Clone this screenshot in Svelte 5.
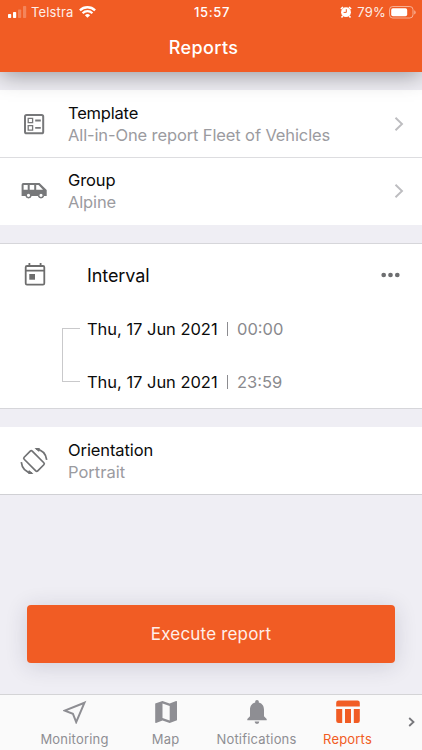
<script>
  const dates = [
    { day: 'Thu, 17 Jun 2021', time: '00:00' },
    { day: 'Thu, 17 Jun 2021', time: '23:59' }
  ];
</script>

{#snippet chevron()}
  <svg class="chevron" width="10" height="16" viewBox="0 0 10 16"><path d="M1.500 1.700 8 8l-6.500 6.300" fill="none" stroke="#bdbdc0" stroke-width="1.9" /></svg>
{/snippet}

<div class="screen">
  <header>
    <div class="status">
      <div class="left">
        <svg width="19" height="12" viewBox="0 0 19 12" fill="#fff">
          <rect x="0" y="8" width="3.200" height="4" rx=".7" />
          <rect x="5" y="6" width="3.200" height="6" rx=".7" />
          <rect x="10" y="3.500" width="3.200" height="8.500" rx=".7" opacity=".25" />
          <rect x="15" y="0" width="3.200" height="12" rx=".7" opacity=".25" />
        </svg>
        <span class="carrier">Telstra</span>
        <svg class="wifi" width="17" height="12" viewBox="0 0 17 12" fill="none" stroke="#fff" stroke-width="2.300">
          <path d="M.9 4.400a10.800 10.800 0 0 1 15.200 0M3.600 7.200a7 7 0 0 1 9.800 0" />
          <path d="M8.500 11.800 5.900 9.300a3.700 3.700 0 0 1 5.200 0z" fill="#fff" stroke="none" />
        </svg>
      </div>
      <span class="clock">15:57</span>
      <div class="right">
        <svg width="12" height="12" viewBox="0 0 12 12">
          <circle cx="6" cy="6.200" r="4.900" fill="#fff" />
          <path d="M.9 3 3 1M11.100 3 9 1M2.700 10 1.500 11.400M9.300 10l1.200 1.400" stroke="#fff" stroke-width="1.600" />
          <path d="M6.300 3.200v3.200H3.600" fill="none" stroke="#f15c24" stroke-width="1" />
        </svg>
        <span class="percent">79%</span>
        <svg class="battery" width="27" height="13" viewBox="0 0 27 13">
          <rect x=".5" y=".5" width="23.500" height="11.500" rx="3.200" fill="none" stroke="#fff" stroke-opacity=".5" />
          <rect x="2.200" y="2.200" width="16" height="8.100" rx="1.700" fill="#fff" />
          <path d="M25.200 4.300v4.200q1.500-.6 1.500-2.100t-1.500-2.100" fill="#fff" opacity=".5" />
        </svg>
      </div>
    </div>
    <h1><span>Reports</span></h1>
  </header>

  <main>
    <section class="first">
      <div class="row divided">
        <svg class="icon" width="28" height="28" viewBox="0 0 28 28" fill="none" stroke="#77787a">
          <rect x="5" y="4.900" width="18.200" height="18.400" rx="1.600" stroke-width="2" />
          <path d="M8.200 8.300h4.400v4.400H8.200zM8.200 15.700h4.400v4.400H8.200z" stroke-width="1.300" />
          <path d="M15.200 10.500h5.600M15.200 17.900h5.600" stroke-width="1.900" />
        </svg>
        <div class="copy"><b class="template">Template</b><span class="allin">All-in-One report Fleet of Vehicles</span></div>
        {@render chevron()}
      </div>
      <div class="row vehicle">
        <svg class="icon" width="28" height="28" viewBox="0 0 28 28">
          <path fill="#77787a" fill-rule="evenodd" d="M3.300 6h16.200l7.200 7v6h-2.600a3.200 3.200 0 0 1-6.200 0h-6.300a3.200 3.200 0 0 1-6.200 0H1.600V7.700Q1.600 6 3.300 6zM3.600 8v4.700h4.100V8zM9.700 8v4.700h4.500V8zM16.200 8v4.700h6.800L18.500 8z" />
          <circle cx="8.500" cy="18.300" r="2.200" fill="#fff" stroke="#77787a" stroke-width="1.200" />
          <circle cx="21" cy="18.300" r="2.200" fill="#fff" stroke="#77787a" stroke-width="1.200" />
        </svg>
        <div class="copy"><b class="group">Group</b><span class="alpine">Alpine</span></div>
        {@render chevron()}
      </div>
    </section>

    <section class="interval">
      <div class="heading">
        <svg width="22" height="25" viewBox="0 0 22 25">
          <path fill="none" stroke="#6d6d6d" stroke-width="1.800" d="M3 4h16q1.300 0 1.300 1.300v16q0 1.400-1.300 1.400H3q-1.300 0-1.300-1.400v-16Q1.700 4 3 4zM1.700 8.600h18.600M5.400 1v3M16.600 1v3" />
          <rect x="5.300" y="12" width="5.700" height="5.700" fill="#6d6d6d" />
        </svg>
        <b>Interval</b>
        <svg class="dots" width="19" height="6" viewBox="0 0 19 6" fill="#6d6e70"><circle cx="2.700" cy="3" r="2.350" /><circle cx="9.500" cy="3" r="2.350" /><circle cx="16.300" cy="3" r="2.350" /></svg>
      </div>
      <div class="range">
        <div class="bracket"></div>
        <div class="dates">
          {#each dates as d}
            <div class="date"><span class="day">{d.day}</span><i></i><span class="time">{d.time}</span></div>
          {/each}
        </div>
      </div>
    </section>

    <section class="orientation">
      <div class="row">
        <svg class="icon" width="28" height="28" viewBox="0 0 28 28" fill="none" stroke="#717274">
          <rect x="8.300" y="4.400" width="11.400" height="19.200" rx="1.400" transform="rotate(-45 14 14)" stroke-width="1.700" />
          <path d="M16 1.800q9.600 1.600 10.700 11.100M12 26.200Q2.400 24.600 1.300 15.100" stroke-width="1.700" />
          <path d="M14.500 1h5.300l-.7 4zM13.500 27H8.200l.7-4z" fill="#717274" stroke="none" />
        </svg>
        <div class="copy"><b class="orient">Orientation</b><span class="portrait">Portrait</span></div>
      </div>
    </section>

    <button><span>Execute report</span></button>
  </main>

  <nav>
    <div class="tab monitoring">
      <svg width="24" height="24" viewBox="0 0 24 24"><path d="M21.500 2.700 1.800 10.600l8.100 3.100 3.300 8.400z" fill="none" stroke="#8e8e93" stroke-width="2" /></svg>
      <span>Monitoring</span>
    </div>
    <div class="tab map">
      <svg width="24" height="24" viewBox="0 0 24 24"><path fill="#8e8e93" fill-rule="evenodd" d="M1.200 3.500 8.500 1l7.200 2.500L22.100 1q.9-.2.900.7v18.600L15.700 23l-7.200-2.600L2 22.900q-.8.200-.8-.7zM8.500 3.500v14.600l7.200 2.500V6z" /></svg>
      <span>Map</span>
    </div>
    <div class="tab notifications">
      <svg width="24" height="24" viewBox="0 0 24 24" fill="#8e8e93"><path d="M12 0a1.800 1.800 0 0 1 1.800 2v.6C17.600 3.600 19 6.600 19 10v6.200l2.700 2.800v1.300H2.300V19L5 16.200V10c0-3.400 1.400-6.400 5.200-7.400V2A1.800 1.800 0 0 1 12 0zM9.700 21.600h4.600a2.300 2.300 0 0 1-4.600 0z" /></svg>
      <span>Notifications</span>
    </div>
    <div class="tab reports">
      <svg width="24" height="24" viewBox="0 0 24 24" fill="#f15c24"><path d="M2.500.5h19Q23.800.5 23.800 2.800v3.700H.2V2.800Q.2.500 2.500.5zM.2 9h6v14H2.500Q.2 23 .2 20.700zM9 9h6v14H9zM17.800 9h6v11.700q0 2.300-2.300 2.300h-3.700z" /></svg>
      <span>Reports</span>
    </div>
    <svg class="more" width="7" height="10" viewBox="0 0 7 10"><path d="m1.200 1 4.300 4-4.300 4" fill="none" stroke="#77777b" stroke-width="1.800" /></svg>
  </nav>
</div>

<style>
  :global(body) { margin: 0; }
  * { box-sizing: border-box; }
  .screen { width: 422px; height: 750px; display: flex; flex-direction: column; overflow: hidden; background: #efeef4; font-family: Inter, Roboto, sans-serif; }
  svg { display: block; flex: none; }
  span, b { white-space: nowrap; }
  b { font-weight: 400; color: #0b0b0b; }
  header { height: 72px; flex: none; background: #f15c24; color: #fff; position: relative; z-index: 1; box-shadow: 0 3px 22px rgba(0, 0, 0, .38); clip-path: inset(0 0 -40px 0); }
  .status { height: 24px; display: grid; grid-template-columns: 1fr auto 1fr; align-items: center; padding: 0 6px 0 8px; font-size: 13px; line-height: 24px; }
  .left, .right { display: flex; align-items: center; }
  .right { justify-content: flex-end; }
  .carrier { margin-left: 4px; width: 48px; letter-spacing: .15px; opacity: .9; }
  .clock { font-weight: 500; letter-spacing: .6px; }
  .percent { margin: 0 3px 0 5px; letter-spacing: .2px; opacity: .9; }
  h1 { margin: 0; text-align: center; font-size: 18px; letter-spacing: .4px; line-height: 47px; font-weight: 500; padding-right: 15px; }
  main { flex: 1; display: flex; flex-direction: column; padding-top: 18px; }
  section { background: #fff; flex: none; }
  .row { height: 67px; display: flex; align-items: center; padding: 0 18px 0 20px; }
  .vehicle { padding-bottom: 1px; }
  .divided { height: 68px; border-bottom: 1px solid #dddde0; }
  .copy { flex: 1; margin-left: 20px; display: flex; flex-direction: column; align-items: flex-start; font-size: 16.500px; line-height: 22px; }
  .copy span { color: #9b9ba0; }
  .copy b { letter-spacing: -.1px; }
  .copy .template { letter-spacing: -.2px; }
  .copy .allin { letter-spacing: -.12px; }
  .copy .alpine { letter-spacing: -.15px; }
  .interval { height: 166px; margin-top: 18px; border: solid #d6d6da; border-width: 1px 0; }
  .heading { height: 62px; display: flex; align-items: center; padding: 0 22px 0 24px; font-size: 18px; }
  .heading svg:first-child { margin-top: -2px; }
  .heading b { margin-left: 41px; flex: 1; letter-spacing: -.1px; }
  .range { display: flex; }
  .bracket { width: 18px; height: 54px; margin: 22px 0 0 62px; border: 1px solid #c9c9cb; border-right: 0; }
  .dates { margin: 10px 0 0 7px; }
  .date { height: 26px; margin-bottom: 27px; display: flex; align-items: center; font-size: 16.500px; line-height: 26px; }
  .day { width: 140px; color: #0b0b0b; letter-spacing: -.03px; }
  .date i { width: 1px; height: 14px; background: #8c8c90; }
  .time { margin-left: 9px; color: #8a8a8e; }
  .orientation { height: 68px; margin-top: 18px; border-bottom: 1px solid #d0d0d4; }
  button { width: 368px; height: 58px; margin: 110px 0 0 27px; border: 0; border-radius: 4px; background: #f15c24; color: #ffefe9; font: 17px Inter, sans-serif; letter-spacing: .18px; box-shadow: 0 3px 22px rgba(40, 40, 70, .16); flex: none; padding: 0; }
  nav { height: 56px; flex: none; background: #fafafa; border-top: 1px solid #d4d4d6; display: flex; position: relative; padding-left: 29px; }
  .tab { width: 91px; display: flex; flex-direction: column; align-items: center; padding-top: 5px; font-size: 13px; letter-spacing: .2px; line-height: 18px; color: #8e8e93; }
  .tab span { margin-top: 6px; }
  .reports { color: #f15c24; }
  .more { margin: 22px 0 0 15px; }
</style>
